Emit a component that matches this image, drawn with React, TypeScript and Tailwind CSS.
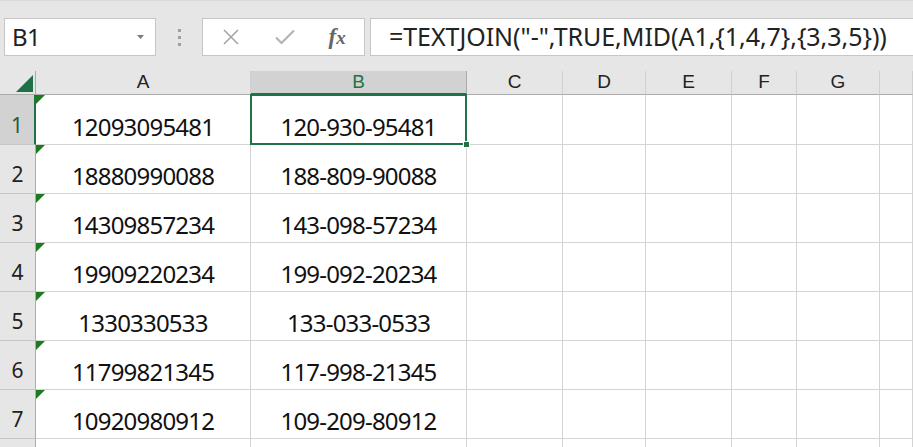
import React from 'react'

const COLS = [
  { key: 'A', w: 'w-[215px]' },
  { key: 'B', w: 'w-[216px]' },
  { key: 'C', w: 'w-[96px]' },
  { key: 'D', w: 'w-[83px]' },
  { key: 'E', w: 'w-[86px]' },
  { key: 'F', w: 'w-[65px]' },
  { key: 'G', w: 'w-[83px]' },
  { key: 'H', w: 'flex-1' },
]

const ROWS = [
  ['12093095481', '120-930-95481'],
  ['18880990088', '188-809-90088'],
  ['14309857234', '143-098-57234'],
  ['19909220234', '199-092-20234'],
  ['1330330533', '133-033-0533'],
  ['11799821345', '117-998-21345'],
  ['10920980912', '109-209-80912'],
]

const cellFont = { fontFamily: '"Noto Sans", "Liberation Sans", sans-serif' }
const headFont = { fontFamily: '"Liberation Sans", Arial, sans-serif' }

function Toolbar() {
  return (
    <div className="flex h-[71px] items-start bg-[#e6e6e6] pt-[17px] border-t border-[#d9d9d9]">
      {/* Name box */}
      <div className="ml-[4px] flex h-[38px] w-[152px] items-center justify-between border border-[#c6c6c6] bg-white pl-[7px] pr-[11px]">
        <span className="text-[24px] tracking-[-0.5px] text-[#222]" style={cellFont}>B1</span>
        <svg width="7" height="4" viewBox="0 0 7 4"><path d="M0 0h7L3.5 4z" fill="#7a7a7a" /></svg>
      </div>
      {/* grip */}
      <div className="flex h-[38px] w-[46px] flex-col items-center justify-center gap-[4px]">
        <span className="h-[3px] w-[3px] bg-[#a0a0a0]" />
        <span className="h-[3px] w-[3px] bg-[#a0a0a0]" />
        <span className="h-[3px] w-[3px] bg-[#a0a0a0]" />
      </div>
      {/* cancel / enter / fx */}
      <div className="flex h-[38px] w-[163px] items-center border border-[#c6c6c6] bg-white">
        <div className="flex w-[54px] justify-center pl-[2px]">
          <svg width="16" height="16" viewBox="0 0 16 16"><path d="M1 1l14 14M15 1L1 15" stroke="#a6a6a6" strokeWidth="1.6" /></svg>
        </div>
        <div className="flex w-[54px] justify-center pl-[2px]">
          <svg width="20" height="16" viewBox="0 0 20 16"><path d="M1 8.5l5.5 5.5L19 1.5" stroke="#b4b4b4" strokeWidth="2.2" fill="none" /></svg>
        </div>
        <div className="flex w-[54px] justify-center">
          <span className="text-[23px] italic text-[#666]" style={{ fontFamily: '"Liberation Serif", "DejaVu Serif", serif' }}>
            <span className="font-semibold">f</span><span className="text-[19px] font-semibold">x</span>
          </span>
        </div>
      </div>
      {/* formula */}
      <div className="ml-[5px] flex h-[38px] flex-1 items-center border border-r-0 border-[#c6c6c6] bg-white pl-[18px]">
        <span className="whitespace-nowrap text-[25px] tracking-[-0.05px] text-[#222]" style={cellFont}>
          =TEXTJOIN("-",TRUE,MID(A1,{'{'}1,4,7{'}'},{'{'}3,3,5{'}'}))
        </span>
      </div>
    </div>
  )
}

function HeaderRow() {
  return (
    <div className="flex h-[24px] bg-[#e6e6e6]">
      <div className="relative w-[36px] border-r border-b border-[#ababab]">
        <svg className="absolute left-[16px] top-[4px]" width="17" height="17" viewBox="0 0 17 17"><path d="M17 0v17H0z" fill="#1e7145" /></svg>
      </div>
      {COLS.map(c => {
        const sel = c.key === 'B'
        return (
          <div
            key={c.key}
            className={`${c.w} flex items-center justify-center border-r text-[19px] ${sel ? 'border-[#ababab] border-b-2 border-b-[#217346] bg-[#d2d2d2] text-[#217346]' : 'border-[#d0d0d0] border-b border-b-[#ababab] text-[#222]'}`}
            style={headFont}
          >
            {c.key === 'H' ? '' : c.key}
          </div>
        )
      })}
    </div>
  )
}

export default function App() {
  return (
    <div className="h-[447px] w-[913px] overflow-hidden bg-white">
      <Toolbar />
      <HeaderRow />
      {[...ROWS, ['', '']].map((r, i) => {
        const first = i === 0
        return (
          <div key={i} className={`flex ${first ? 'relative z-10 h-[50px]' : 'h-[49px]'}`}>
            <div
              className={`flex w-[36px] items-end justify-center border-b border-[#c6c6c6] pb-[3px] text-[21px] ${first ? 'bg-[#d2d2d2] border-r-2 border-r-[#217346] text-[#1e5e3c]' : 'bg-[#e6e6e6] border-r border-r-[#ababab] text-[#222]'}`}
              style={cellFont}
            >
              {i < 7 ? i + 1 : ''}
            </div>
            {COLS.map((c, j) => {
              const text = j === 0 ? r[0] : j === 1 ? r[1] : ''
              const selected = first && j === 1
              return (
                <div
                  key={c.key}
                  className={`${c.w} relative flex items-end justify-center border-r border-b border-[#d4d4d4] text-[24px] leading-[32px] tracking-[-0.8px] text-[#111] ${selected ? 'z-10' : ''}`}
                  style={cellFont}
                >
                  {j === 0 && text && (
                    <svg className="absolute left-0 top-0" width="9" height="9" viewBox="0 0 9 9"><path d="M0 0h9L0 9z" fill="#1e7a1e" /></svg>
                  )}
                  {selected && (
                    <>
                      <div className="absolute -left-[1px] -top-[1px] -right-[1px] -bottom-[1px] border-2 border-[#217346]" />
                      <div className="absolute -right-[4px] -bottom-[4px] z-20 h-[7px] w-[7px] border border-white bg-[#217346]" />
                    </>
                  )}
                  <span className="pb-[1px]">{text}</span>
                </div>
              )
            })}
          </div>
        )
      })}
    </div>
  )
}
